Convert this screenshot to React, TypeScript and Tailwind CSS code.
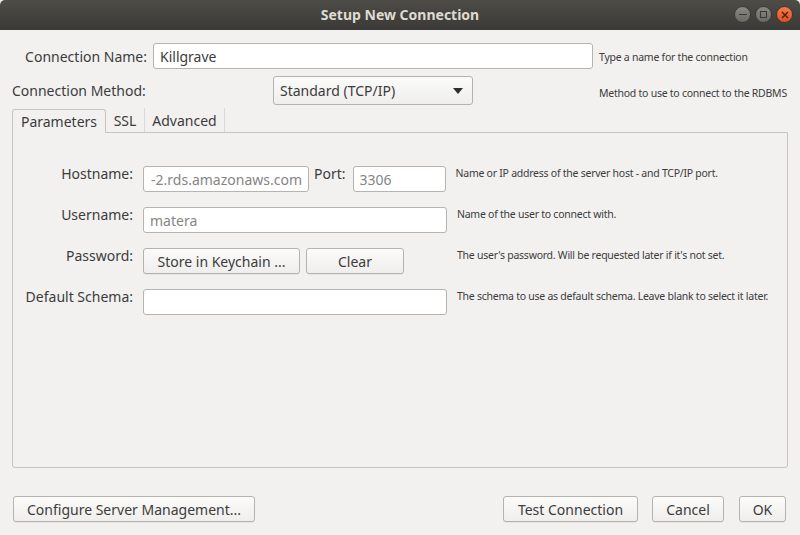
import React from "react";

const font = { fontFamily: '"Noto Sans", "Open Sans", sans-serif' };

const Btn = ({ children, className = "" }: { children: React.ReactNode; className?: string }) => (
  <button
    className={`h-[26px] shrink-0 rounded-[3px] border border-[#b6b3ae] bg-gradient-to-b from-[#fbfbfa] to-[#efeeec] text-[14px] text-[#3c3c3c] shadow-[0_1px_0_rgba(0,0,0,0.05)] ${className}`}
  >
    {children}
  </button>
);

const Field = ({ value = "", gray = false, className = "" }: { value?: string; gray?: boolean; className?: string }) => (
  <div
    className={`flex h-[26px] shrink-0 items-center overflow-hidden whitespace-nowrap rounded-[3px] border border-[#b7b4af] bg-white px-[6px] text-[14px] ${gray ? "text-[#858585]" : "text-[#3c3c3c]"} ${className}`}
  >
    {value}
  </div>
);

const Hint = ({ children }: { children: React.ReactNode }) => (
  <span className="whitespace-nowrap text-[10.5px] tracking-[-0.25px] text-[#3c3c3c]">{children}</span>
);

export default function App() {
  return (
    <div style={font} className="flex h-[535px] w-[800px] flex-col overflow-hidden bg-[#f2f1f0] text-[#3c3c3c]">
      {/* title bar */}
      <div className="relative flex h-[30px] shrink-0 items-center justify-center rounded-t-[5px] bg-gradient-to-b from-[#4d4c47] to-[#3b3a36]">
        <span className="-translate-y-px text-[14px] font-bold text-[#dfdbd2]">Setup New Connection</span>
        <div className="absolute right-[7px] top-[6px] flex gap-[4px]">
          <div className="flex h-[17px] w-[17px] items-center justify-center rounded-full border border-[#3a3935] bg-gradient-to-b from-[#8a8983] to-[#6a6964]">
            <div className="h-[1.5px] w-[8px] bg-[#3a3935]" />
          </div>
          <div className="flex h-[17px] w-[17px] items-center justify-center rounded-full border border-[#3a3935] bg-gradient-to-b from-[#8a8983] to-[#6a6964]">
            <div className="h-[7px] w-[7px] border-[1.5px] border-[#3a3935]" />
          </div>
          <div className="flex h-[17px] w-[17px] items-center justify-center rounded-full border border-[#3a3935] bg-gradient-to-b from-[#f47a4a] to-[#e2511c]">
            <svg width="8" height="8" viewBox="0 0 8 8">
              <path d="M1 1L7 7M7 1L1 7" stroke="#5a1d08" strokeWidth="1.5" />
            </svg>
          </div>
        </div>
      </div>

      <div className="flex flex-1 flex-col px-[12px] pt-[13px]">
        {/* connection name */}
        <div className="flex h-[26px] items-center">
          <span className="w-[135px] shrink-0 text-right text-[14px]">Connection Name:</span>
          <Field value="Killgrave" className="ml-[6px] w-[440px]" />
          <span className="ml-[6px] -translate-y-[1px]"><Hint>Type a name for the connection</Hint></span>
        </div>

        {/* connection method */}
        <div className="mt-[7px] flex h-[29px] items-center">
          <span className="w-[261px] shrink-0 text-[14px]">Connection Method:</span>
          <div className="flex h-[29px] w-[200px] shrink-0 items-center justify-between rounded-[3px] border border-[#b6b3ae] bg-gradient-to-b from-[#fbfbfa] to-[#efeeec] pl-[6px] pr-[9px] text-[14px]">
            <span>Standard (TCP/IP)</span>
            <svg width="10" height="6" viewBox="0 0 10 6">
              <path d="M0 0H10L5 6Z" fill="#2e2e2e" />
            </svg>
          </div>
          <span className="ml-[126px]"><Hint>Method to use to connect to the RDBMS</Hint></span>
        </div>

        {/* tabs */}
        <div className="mt-[3px] flex h-[24px] items-end">
          <div className="relative z-10 -mb-px flex h-[24px] w-[94px] items-center justify-center rounded-t-[3px] border border-b-0 border-[#c8c5c0] bg-[#f2f1f0] text-[14px]">
            Parameters
          </div>
          <div className="flex h-[24px] w-[39px] items-center justify-center border-r border-[#dddad6] text-[14px]">SSL</div>
          <div className="flex h-[24px] w-[80px] items-center justify-center border-r border-[#dddad6] text-[14px]">Advanced</div>
        </div>

        {/* panel */}
        <div className="h-[336px] rounded-b-[3px] border border-[#c8c5c0] pt-[33px]">
          <div className="grid grid-cols-[120px_auto] items-center gap-x-[10px] gap-y-[15px]">
            <span className="-translate-y-[6px] text-right text-[14px]">Hostname:</span>
            <div className="flex items-center">
              <Field value="-2.rds.amazonaws.com" gray className="w-[166px] justify-end" />
              <span className="ml-[5px] -translate-y-[6px] text-[14px]">Port:</span>
              <Field value="3306" gray className="ml-[7px] w-[93px]" />
              <span className="ml-[10px] -translate-y-[8px]"><Hint>Name or IP address of the server host - and TCP/IP port.</Hint></span>
            </div>

            <span className="-translate-y-[6px] text-right text-[14px]">Username:</span>
            <div className="flex items-center">
              <Field value="matera" gray className="w-[304px]" />
              <span className="ml-[10px] -translate-y-[8px]"><Hint>Name of the user to connect with.</Hint></span>
            </div>

            <span className="-translate-y-[6px] text-right text-[14px]">Password:</span>
            <div className="flex items-center">
              <Btn className="w-[157px]">Store in Keychain ...</Btn>
              <Btn className="ml-[6px] w-[98px]">Clear</Btn>
              <span className="ml-[53px] -translate-y-[8px]"><Hint>The user's password. Will be requested later if it's not set.</Hint></span>
            </div>

            <span className="-translate-y-[6px] text-right text-[14px]">Default Schema:</span>
            <div className="flex items-center">
              <Field className="w-[304px]" />
              <span className="ml-[10px] -translate-y-[8px]"><Hint>The schema to use as default schema. Leave blank to select it later.</Hint></span>
            </div>
          </div>
        </div>

        {/* bottom buttons */}
        <div className="mt-[28px] flex items-center pr-[2px]">
          <Btn className="ml-[1px] w-[242px]">Configure Server Management...</Btn>
          <div className="flex-1" />
          <Btn className="w-[135px]">Test Connection</Btn>
          <Btn className="ml-[14px] w-[72px]">Cancel</Btn>
          <Btn className="ml-[15px] w-[47px]">OK</Btn>
        </div>
      </div>
    </div>
  );
}
